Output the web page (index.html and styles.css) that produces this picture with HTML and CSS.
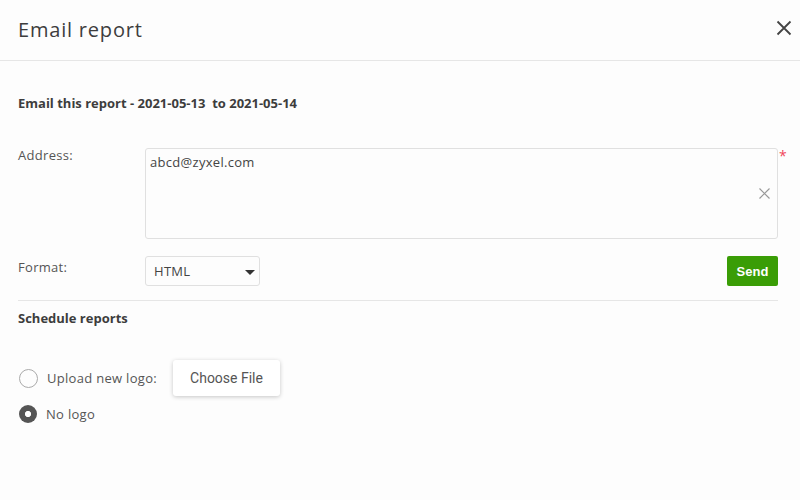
FILE: index.html
```html
<!DOCTYPE html>
<html lang="en">
<head>
  <meta charset="utf-8">
  <title>Email report</title>
  <link rel="stylesheet" href="styles.css">
</head>
<body>
  <div class="modal">
    <div class="modal-header">
      <h2 class="modal-title">Email report</h2>
      <span class="close-btn">
        <svg width="16" height="16" viewBox="0 0 16 16"><path d="M1.5 1.5 L14.5 14.5 M14.5 1.5 L1.5 14.5" stroke="#444" stroke-width="1.8" fill="none"/></svg>
      </span>
    </div>

    <div class="modal-body">
      <p class="report-title">Email this report - 2021-05-13&nbsp; to 2021-05-14</p>

      <div class="form-row address-row">
        <label class="form-label">Address:</label>
        <div class="address-box">
          <span class="address-text">abcd@zyxel.com</span>
          <span class="clear-btn">
            <svg width="11" height="11" viewBox="0 0 11 11"><path d="M0.5 0.5 L10.5 10.5 M10.5 0.5 L0.5 10.5" stroke="#999" stroke-width="1.2" fill="none"/></svg>
          </span>
          <span class="required">*</span>
        </div>
      </div>

      <div class="form-row format-row">
        <label class="form-label">Format:</label>
        <div class="select-box">
          <span>HTML</span>
          <span class="caret"></span>
        </div>
        <button class="send-btn">Send</button>
      </div>

      <div class="section">
        <p class="section-title">Schedule reports</p>
        <div class="radio-row upload-row">
          <span class="radio"></span>
          <span class="radio-label">Upload new logo:</span>
          <button class="file-btn">Choose File</button>
        </div>
        <div class="radio-row">
          <span class="radio checked"></span>
          <span class="radio-label">No logo</span>
        </div>
      </div>
    </div>
  </div>
</body>
</html>
```

FILE: styles.css
```css
body {
  margin: 0;
  background-color: #fdfdfd;
  font-family: "Open Sans", "Noto Sans", sans-serif;
  color: #444;
  letter-spacing: 0.3px;
}
.modal {
  width: 800px;
  height: 500px;
}
.modal-header {
  height: 60px;
  padding: 0 8px 0 18px;
  display: flex;
  align-items: center;
  justify-content: space-between;
  border-bottom: 1px solid #e6e6e6;
}
.modal-title {
  margin: 0 0 2px;
  font-size: 20px;
  font-weight: 500;
  color: #3d3d3d;
  letter-spacing: 0.8px;
}
.close-btn {
  display: flex;
  width: 16px;
  height: 16px;
  margin-bottom: 4px;
}
.modal-body {
  padding: 0 22px 0 18px;
}
.report-title {
  margin: 33px 0 0;
  font-size: 13px;
  font-weight: bold;
  color: #3d3d3d;
  letter-spacing: 0;
}
.form-row {
  display: flex;
  align-items: flex-start;
}
.form-label {
  width: 127px;
  font-size: 13px;
  color: #555;
  flex-shrink: 0;
}
.address-row {
  margin-top: 36px;
}
.address-row .form-label {
  margin-top: -2px;
}
.address-box {
  position: relative;
  flex: 1;
  height: 91px;
  box-sizing: border-box;
  border: 1px solid #e0e0e0;
  border-radius: 3px;
  padding: 4px 4px;
  font-size: 13px;
  color: #444;
}
.clear-btn {
  position: absolute;
  right: 7px;
  top: 39px;
  display: flex;
}
.required {
  position: absolute;
  right: -10px;
  top: -3px;
  color: #f0465a;
  font-size: 14px;
}
.format-row {
  margin-top: 17px;
  padding-bottom: 14px;
  border-bottom: 1px solid #e6e6e6;
}
.format-row .form-label {
  padding-top: 2px;
}
.select-box {
  width: 115px;
  height: 30px;
  border: 1px solid #e0e0e0;
  border-radius: 3px;
  display: flex;
  align-items: center;
  justify-content: space-between;
  padding: 0 4px 0 8px;
  font-size: 13px;
  color: #444;
  box-sizing: border-box;
}
.caret {
  width: 0;
  height: 0;
  border-left: 5px solid transparent;
  border-right: 5px solid transparent;
  border-top: 5px solid #333;
  margin-top: 2px;
}
.send-btn {
  margin-left: auto;
  width: 51px;
  height: 30px;
  border: none;
  border-radius: 2px;
  background-color: #3a9d06;
  color: white;
  font-family: "Liberation Sans", Arial, sans-serif;
  font-size: 13px;
  font-weight: bold;
  letter-spacing: 0;
}
.section-title {
  margin: 8px 0 0;
  font-size: 13px;
  font-weight: bold;
  color: #3d3d3d;
  letter-spacing: 0;
}
.radio-row {
  display: flex;
  align-items: center;
}
.upload-row {
  margin-top: 33px;
}
.radio-row + .radio-row {
  margin-top: 9px;
}
.radio {
  width: 17px;
  height: 17px;
  border: 1.5px solid #aaa;
  border-radius: 50%;
  margin: 0 9px 0 1px;
}
.radio.checked {
  width: 18px;
  height: 18px;
  border: none;
  background: radial-gradient(circle, #fff 0 2.8px, #555 3.3px);
}
.radio-label {
  font-size: 13px;
  color: #555;
}
.file-btn {
  margin-left: 16px;
  width: 107px;
  height: 36px;
  border: none;
  border-radius: 3px;
  background-color: #fff;
  box-shadow: 0 1px 4px rgba(0, 0, 0, 0.22);
  font-family: "Roboto", sans-serif;
  font-size: 14px;
  color: #555;
  letter-spacing: 0;
}
```
